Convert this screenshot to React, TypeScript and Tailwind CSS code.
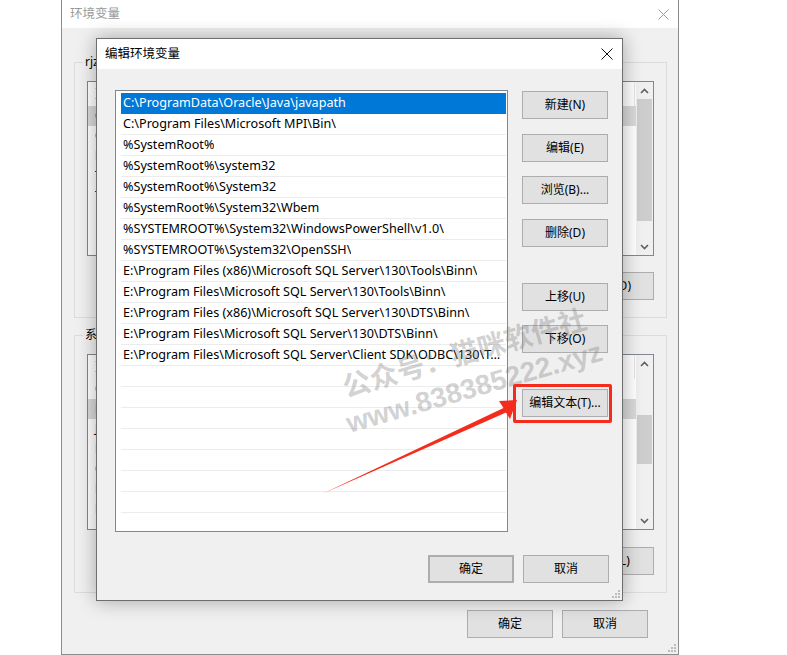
import React from "react";

const paths = [
  "C:\\ProgramData\\Oracle\\Java\\javapath",
  "C:\\Program Files\\Microsoft MPI\\Bin\\",
  "%SystemRoot%",
  "%SystemRoot%\\system32",
  "%SystemRoot%\\System32",
  "%SystemRoot%\\System32\\Wbem",
  "%SYSTEMROOT%\\System32\\WindowsPowerShell\\v1.0\\",
  "%SYSTEMROOT%\\System32\\OpenSSH\\",
  "E:\\Program Files (x86)\\Microsoft SQL Server\\130\\Tools\\Binn\\",
  "E:\\Program Files\\Microsoft SQL Server\\130\\Tools\\Binn\\",
  "E:\\Program Files (x86)\\Microsoft SQL Server\\130\\DTS\\Binn\\",
  "E:\\Program Files\\Microsoft SQL Server\\130\\DTS\\Binn\\",
  "E:\\Program Files\\Microsoft SQL Server\\Client SDK\\ODBC\\130\\Tools\\Binn\\",
];

const userVars = [
  ["ChocolateyLastPathUpdate", "132478906185123456"],
  ["OneDrive", "C:\\Users\\rjz\\OneDrive"],
  ["Path", "C:\\Users\\rjz\\AppData\\Local\\Microsoft\\WindowsApps;C:\\Users\\rjz\\AppData\\Local\\Programs\\Microsoft VS Code\\bin;C:\\Users\\rjz\\.dotnet\\tools"],
  ["TEMP", "C:\\Users\\rjz\\AppData\\Local\\Temp"],
  ["TMP", "C:\\Users\\rjz\\AppData\\Local\\Temp"],
];

const sysVars = [
  ["ComSpec", "C:\\WINDOWS\\system32\\cmd.exe"],
  ["DriverData", "C:\\Windows\\System32\\Drivers\\DriverData"],
  ["JAVA_HOME", "C:\\Program Files\\Java\\jdk1.8.0_201"],
  ["NUMBER_OF_PROCESSORS", "8"],
  ["OS", "Windows_NT"],
  ["Path", "C:\\ProgramData\\Oracle\\Java\\javapath;C:\\Program Files\\Microsoft MPI\\Bin\\;%SystemRoot%"],
  ["PATHEXT", ".COM;.EXE;.BAT;.CMD;.VBS;.VBE;.JS;.JSE;.WSF;.WSH;.MSC"],
];

function Btn({ children, className = "" }: { children: React.ReactNode; className?: string }) {
  return (
    <div className={`h-[28px] w-[86px] shrink-0 flex items-center justify-center bg-[#e1e1e1] border border-[#adadad] text-black ${className}`}>
      {children}
    </div>
  );
}

function Chevron({ up }: { up?: boolean }) {
  return (
    <div className="h-[17px] flex items-center justify-center">
      <svg width="9" height="6" viewBox="0 0 9 6">
        <path d={up ? "M1 5 L4.5 1.5 L8 5" : "M1 1 L4.5 4.5 L8 1"} fill="none" stroke="#606060" strokeWidth="1.6" />
      </svg>
    </div>
  );
}

function VarList({ rows, selected, thumbTop, thumbH, height }: { rows: string[][]; selected: number; thumbTop: number; thumbH: number; height: string }) {
  return (
    <div className={`flex border border-[#828790] bg-white ${height}`}>
      <div className="flex-1 min-w-0 overflow-hidden">
        <div className="flex h-[24px] items-center">
          <div className="w-[150px] pl-[7px] h-full flex items-center border-r border-[#e5e5e5]">变量</div>
          <div className="w-[397px] pl-[7px] h-full flex items-center border-r border-[#e5e5e5]">值</div>
        </div>
        {rows.map(([k, v], i) => (
          <div key={k} className={`flex h-[20px] items-center ${i === selected ? "bg-[#d9d9d9]" : ""}`}>
            <div className="w-[150px] pl-[7px] truncate">{k}</div>
            <div className="w-[397px] pl-[7px] pr-[6px] truncate">{v}</div>
          </div>
        ))}
      </div>
      <div className="w-[17px] bg-[#f0f0f0] flex flex-col">
        <Chevron up />
        <div className="flex-1 flex flex-col">
          <div className="mx-[1px] bg-[#cdcdcd]" style={{ marginTop: thumbTop, height: thumbH }} />
        </div>
        <Chevron />
      </div>
    </div>
  );
}

function Grip() {
  return (
    <svg width="9" height="9" viewBox="0 0 9 9" className="absolute right-[2px] bottom-[2px]">
      {[[7, 1], [4, 4], [7, 4], [1, 7], [4, 7], [7, 7]].map(([x, y]) => (
        <rect key={`${x}-${y}`} x={x} y={y} width="2" height="2" fill="#bcbcbc" />
      ))}
    </svg>
  );
}

export default function App() {
  return (
    <div className="relative w-[787px] h-[655px] bg-white overflow-hidden text-[12px] text-black font-['Noto_Sans','Noto_Sans_CJK_SC',sans-serif]">
      {/* 环境变量 (background window) */}
      <div className="absolute left-[61px] top-[-1px] w-[618px] h-[656px] border border-[#8c8c8c] bg-[#f0f0f0] flex flex-col">
        <div className="h-[28px] bg-white flex items-center justify-between pl-[8px] pr-[9px]">
          <span className="text-[#999999] text-[12.5px]">环境变量</span>
          <svg width="11" height="11" viewBox="0 0 11 11">
            <path d="M0.5 0.5 L10.5 10.5 M10.5 0.5 L0.5 10.5" stroke="#9a9a9a" strokeWidth="1" />
          </svg>
        </div>
        <div className="flex-1 pl-[12px] pr-[11px] pt-[34px]">
          <div className="relative h-[256px] border border-[#dcdcdc] px-[12px] pt-[18px]">
            <span className="absolute left-[8px] top-[-10px] bg-[#f0f0f0] px-[2px]">rjz 的用户变量(U)</span>
            <VarList rows={userVars} selected={0} thumbTop={0} thumbH={122} height="h-[175px]" />
            <div className="mt-[16px] flex justify-end gap-[10px]">
              <Btn>新建(N)...</Btn>
              <Btn>编辑(E)...</Btn>
              <Btn>删除(D)</Btn>
            </div>
          </div>
          <div className="relative mt-[17px] h-[258px] border border-[#dcdcdc] px-[12px] pt-[18px]">
            <span className="absolute left-[8px] top-[-10px] bg-[#f0f0f0] px-[2px]">系统变量(S)</span>
            <VarList rows={sysVars} selected={1} thumbTop={43} thumbH={49} height="h-[176px]" />
            <div className="mt-[17px] flex justify-end gap-[10px]">
              <Btn>新建(W)...</Btn>
              <Btn>编辑(I)...</Btn>
              <Btn>删除(L)</Btn>
            </div>
          </div>
          <div className="mt-[17px] mr-[19px] flex justify-end gap-[9px]">
            <Btn>确定</Btn>
            <Btn>取消</Btn>
          </div>
        </div>
        <Grip />
      </div>

      {/* 编辑环境变量 dialog */}
      <div className="absolute left-[96px] top-[38px] w-[527px] h-[563px] border border-[#6e6e6e] bg-[#f0f0f0] flex flex-col shadow-[0_0_18px_rgba(0,0,0,0.32)]">
        <div className="h-[30px] bg-white flex items-center justify-between pl-[8px] pr-[9px]">
          <span className="text-[12.5px]">编辑环境变量</span>
          <svg width="12" height="12" viewBox="0 0 12 12">
            <path d="M0.5 0.5 L11.5 11.5 M11.5 0.5 L0.5 11.5" stroke="#111" strokeWidth="1" />
          </svg>
        </div>
        <div className="flex-1 pl-[18px] pr-[13px] pt-[21px]">
          <div className="flex">
            <div className="w-[393px] h-[442px] border border-[#828790] bg-white pl-[5px] pr-[1px] pt-[2px] overflow-hidden text-[12.6px]">
              {Array.from({ length: 21 }).map((_, i) => (
                <div
                  key={i}
                  className={`h-[21px] flex items-center pl-[2px] pr-[4px] border-b ${i === 0 ? "bg-[#0078d7] text-white border-[#0078d7]" : "border-[#ececec]"}`}
                >
                  <span className="truncate">{paths[i] ?? ""}</span>
                </div>
              ))}
            </div>
            <div className="ml-[14px] flex flex-col">
              <Btn className="mt-[1px]">新建(N)</Btn>
              <Btn className="mt-[15px]">编辑(E)</Btn>
              <Btn className="mt-[14px]">浏览(B)...</Btn>
              <Btn className="mt-[15px]">删除(D)</Btn>
              <Btn className="mt-[36px]">上移(U)</Btn>
              <Btn className="mt-[14px]">下移(O)</Btn>
              <Btn className="mt-[36px]">编辑文本(T)...</Btn>
            </div>
          </div>
          <div className="mt-[23px] flex justify-end gap-[9px]">
            <Btn className="border-2 border-[#0078d7]">确定</Btn>
            <Btn>取消</Btn>
          </div>
        </div>
        <Grip />
      </div>

      {/* watermark */}
      <div className="absolute left-[330px] top-[374px] w-[270px] origin-top-left -rotate-[16deg] text-center leading-[35px] text-[28px] font-bold text-[rgba(128,128,128,0.36)] font-['Liberation_Sans','Noto_Sans_CJK_SC',sans-serif] pointer-events-none whitespace-nowrap">
        <div>公众号：猫咪软件社</div>
        <div>www.838385222.xyz</div>
      </div>

      {/* annotation */}
      <div className="absolute left-[513px] top-[384px] w-[99px] h-[39px] border-[3px] border-[#f42c1d] rounded-[2px] pointer-events-none" />
      <svg className="absolute left-0 top-0 pointer-events-none" width="787" height="655" viewBox="0 0 787 655">
        <polygon points="322,494 503.5,408 499,401 517,400 510,419 506,412.5" fill="#f42c1d" />
      </svg>
    </div>
  );
}
